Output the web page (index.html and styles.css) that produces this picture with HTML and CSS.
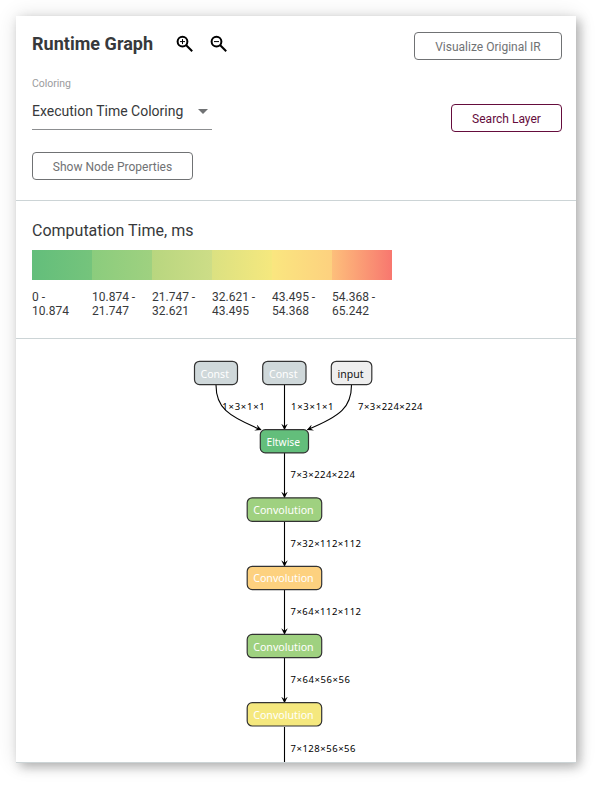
FILE: index.html
```html
<!DOCTYPE html>
<html lang="en">
<head>
<meta charset="utf-8">
<title>Runtime Graph</title>
<link rel="stylesheet" href="styles.css">
</head>
<body>
<main class="card">
  <header class="toolbar">
    <div class="row title-row">
      <h1 class="title">Runtime Graph</h1>
      <svg class="zoom" width="18" height="18" viewBox="0 0 18 18"><circle cx="6.500" cy="6.600" r="4.900"/><path d="M10 10L16.200 16.200"/><path class="sign" d="M4 6.600h5M6.500 4.100v5"/></svg>
      <svg class="zoom" width="18" height="18" viewBox="0 0 18 18"><circle cx="6.500" cy="6.600" r="4.900"/><path d="M10 10L16.200 16.200"/><path class="sign" d="M4 6.600h5"/></svg>
      <button class="btn push visualize">Visualize Original IR</button>
    </div>
    <div class="row coloring-row">
      <div class="field">
        <label class="label">Coloring</label>
        <div class="select"><span>Execution Time Coloring</span><i class="arrow"></i></div>
      </div>
      <button class="btn push search">Search Layer</button>
    </div>
    <button class="btn props">Show Node Properties</button>
  </header>
  <section class="legend">
    <h2 class="subtitle">Computation Time, ms</h2>
    <div class="scale">
      <div class="step"><div class="swatch s1"></div>0 -<br>10.874</div>
      <div class="step"><div class="swatch s2"></div>10.874 -<br>21.747</div>
      <div class="step"><div class="swatch s3"></div>21.747 -<br>32.621</div>
      <div class="step"><div class="swatch s4"></div>32.621 -<br>43.495</div>
      <div class="step"><div class="swatch s5"></div>43.495 -<br>54.368</div>
      <div class="step"><div class="swatch s6"></div>54.368 -<br>65.242</div>
    </div>
  </section>
  <svg class="graph" width="560" height="423" viewBox="16 339 560 423">
    <defs>
      <marker id="tip" viewBox="0 0 10 10" refX="9" refY="5" markerWidth="6.5" markerHeight="6.5" markerUnits="userSpaceOnUse" orient="auto"><path d="M0 0L10 5L0 10L4 5z"/></marker>
    </defs>
    <g class="edges">
      <path d="M216 385C216 407 227 416 261 429.700"/>
      <path d="M284.500 385V429.500"/>
      <path d="M351.500 385C351.500 407 341 416 307.500 429.700"/>
      <path d="M284.500 453V497.500"/>
      <path d="M284.500 522V566"/>
      <path d="M284.500 590V634"/>
      <path d="M284.500 658V702.500"/>
      <path d="M284.500 727V775"/>
    </g>
    <g class="nodes">
      <rect class="const" x="194.500" y="361.300" width="43" height="23.300" rx="5"/>
      <rect class="const" x="262.700" y="361.300" width="43.300" height="23.300" rx="5"/>
      <rect class="input" x="331.300" y="361.300" width="40.500" height="23.300" rx="5"/>
      <rect class="c1" x="260.300" y="429.600" width="48.200" height="23.300" rx="5"/>
      <rect class="c2" x="247.200" y="497.800" width="74.500" height="23.500" rx="5"/>
      <rect class="c5" x="247.200" y="566.300" width="74.500" height="23.300" rx="5"/>
      <rect class="c2" x="247.200" y="634.400" width="74.500" height="23.300" rx="5"/>
      <rect class="c4" x="247.200" y="702.700" width="74.500" height="23.300" rx="5"/>
    </g>
    <g class="names">
      <text x="200.500" y="378" textLength="28.500" lengthAdjust="spacingAndGlyphs">Const</text>
      <text x="269" y="378" textLength="28.500" lengthAdjust="spacingAndGlyphs">Const</text>
      <text class="dark" x="337.500" y="378" textLength="26" lengthAdjust="spacingAndGlyphs">input</text>
      <text x="266.500" y="446" textLength="33.500" lengthAdjust="spacingAndGlyphs">Eltwise</text>
      <text x="253.200" y="514" textLength="60.500" lengthAdjust="spacingAndGlyphs">Convolution</text>
      <text x="253.200" y="582" textLength="60.500" lengthAdjust="spacingAndGlyphs">Convolution</text>
      <text x="253.200" y="651" textLength="60.500" lengthAdjust="spacingAndGlyphs">Convolution</text>
      <text x="253.200" y="719" textLength="60.500" lengthAdjust="spacingAndGlyphs">Convolution</text>
    </g>
    <g class="dims">
      <text x="222.300" y="410" textLength="42.500">1×3×1×1</text>
      <text x="291" y="410" textLength="42.500">1×3×1×1</text>
      <text x="358" y="410" textLength="64.500">7×3×224×224</text>
      <text x="290.500" y="478" textLength="64.500">7×3×224×224</text>
      <text x="290.500" y="547" textLength="70.500">7×32×112×112</text>
      <text x="290.500" y="615" textLength="70.500">7×64×112×112</text>
      <text x="290.500" y="683" textLength="59.500">7×64×56×56</text>
      <text x="290.500" y="752" textLength="65">7×128×56×56</text>
    </g>
  </svg>
</main>
</body>
</html>
```
FILE: styles.css
```css
* { box-sizing: border-box; }
body {
  margin: 0;
  padding: 16px;
  height: 787px;
  overflow: hidden;
  background: #fff;
  color: #37393b;
  font-family: Roboto, "Liberation Sans", sans-serif;
}
.card {
  width: 560px;
  height: 747px;
  background: #fff;
  border-bottom: 1px solid #ccd4d6;
  box-shadow: 0 0 20px rgba(0, 0, 0, .12), 4px 4px 10px rgba(0, 0, 0, .26);
}
.toolbar { height: 185px; padding: 16px 14px 0 16px; border-bottom: 1px solid #ccd4d6; }
.row { display: flex; align-items: flex-start; }
.push { margin-left: auto; }
.title-row { height: 45px; }
.title { margin: 0 24px 0 0; width: 120px; font-size: 18px; line-height: 24px; font-weight: 700; white-space: nowrap; letter-spacing: .03px; }
.zoom { margin: 3px 16px 0 0; fill: none; stroke: #000; stroke-width: 2; }
.zoom .sign { stroke-width: 1; }
.btn {
  height: 28px;
  padding: 1px 0 0;
  border: 1px solid #707274;
  border-radius: 4px;
  background: #fff;
  color: #707274;
  font: 12px/24px Roboto, sans-serif;
  white-space: nowrap;
}
.visualize { width: 148px; }
.search { width: 111px; margin-top: 27px; border-color: #650c3c; color: #650c3c; }
.props { display: block; width: 161px; }
.coloring-row { height: 75px; }
.field { width: 180px; }
.label { display: block; font-size: 10.5px; line-height: 14px; color: #9b9c9d; letter-spacing: -.05px; }
.select {
  display: flex;
  justify-content: space-between;
  align-items: center;
  height: 39px;
  padding: 2px 4px 0 0;
  border-bottom: 1px solid #8c8e90;
  font-size: 14px;
}
.arrow { border: 5px solid transparent; border-top-color: #707274; border-bottom: 0; }
.legend { height: 138px; padding: 17px 16px 0; border-bottom: 1px solid #ccd4d6; }
.subtitle { margin: 0 0 7px; font-size: 16px; line-height: 25px; font-weight: 400; }
.scale { display: flex; }
.step { width: 60px; font-size: 12px; line-height: 14px; }
.swatch { height: 30px; margin-bottom: 10px; }
.s1 { background: linear-gradient(90deg, #63be7b, #75c47c); }
.s2 { background: linear-gradient(90deg, #8bcc7d, #9fd180); }
.s3 { background: linear-gradient(90deg, #b8d67f, #cddd87); }
.s4 { background: linear-gradient(90deg, #dbe181, #f5e87e); }
.s5 { background: linear-gradient(90deg, #fae67f, #fdd17f); }
.s6 { background: linear-gradient(90deg, #fdbf7b, #f8776f); }
.graph { display: block; }
.edges path { fill: none; stroke: #000; stroke-width: 1.1; marker-end: url(#tip); }
.nodes rect { stroke: #333; stroke-width: 1.2; }
.const { fill: #cfd8da; }
.input { fill: #eee; }
.c1 { fill: #63be7b; }
.c2 { fill: #9fd180; }
.c4 { fill: #f5e87e; }
.c5 { fill: #fdd17f; }
.names { font: 11.5px "Noto Sans", "Open Sans", sans-serif; fill: #fff; }
.names .dark { fill: #111; }
.dims { font: 9.5px "Noto Sans", "Open Sans", sans-serif; fill: #000; }
```
